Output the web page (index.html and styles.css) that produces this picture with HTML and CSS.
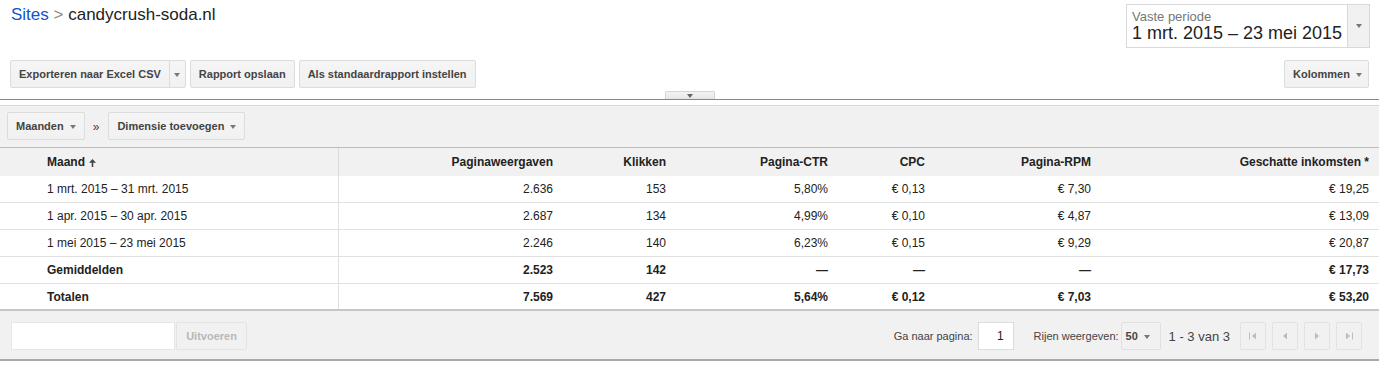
FILE: index.html
```html
<!DOCTYPE html>
<html lang="nl">
<head>
    <meta charset="UTF-8">
    <meta name="viewport" content="width=device-width, initial-scale=1.0">
    <title>Sites - candycrush-soda.nl</title>
    <link rel="stylesheet" href="styles.css">
</head>
<body>
    <div class="page-head">
        <div class="crumbs">
            <a class="crumb-link" href="#">Sites</a> <span class="crumb-sep">&gt;</span> candycrush-soda.nl
        </div>
        <div class="period">
            <div class="period-text">
                <div class="period-label">Vaste periode</div>
                <div class="period-range">1 mrt. 2015 – 23 mei 2015</div>
            </div>
            <div class="period-drop"><span class="caret"></span></div>
        </div>
    </div>

    <div class="actions">
        <div class="btn-split">
            <button class="btn">Exporteren naar Excel CSV</button><button class="btn btn-caret"><span class="caret"></span></button>
        </div>
        <button class="btn">Rapport opslaan</button>
        <button class="btn">Als standaardrapport instellen</button>
        <button class="btn btn-push">Kolommen <span class="caret"></span></button>
    </div>

    <div class="divider">
        <div class="divider-tab"><span class="caret caret-dark"></span></div>
    </div>

    <div class="filters">
        <button class="btn">Maanden <span class="caret"></span></button>
        <span class="filters-sep">»</span>
        <button class="btn">Dimensie toevoegen <span class="caret"></span></button>
    </div>

    <table class="report">
        <colgroup>
            <col style="width: 338px">
            <col style="width: 225px">
            <col style="width: 113px">
            <col style="width: 162px">
            <col style="width: 97px">
            <col style="width: 166px">
            <col style="width: 278px">
        </colgroup>
        <thead>
            <tr>
                <th class="col-dim">Maand <svg class="sort-icon" width="7" height="8" viewBox="0 0 7 8"><path d="M3.5 0L7 3.8H4.3V8H2.7V3.8H0z" fill="#444"/></svg></th>
                <th>Paginaweergaven</th>
                <th>Klikken</th>
                <th>Pagina-CTR</th>
                <th>CPC</th>
                <th>Pagina-RPM</th>
                <th>Geschatte inkomsten *</th>
            </tr>
        </thead>
        <tbody>
            <tr>
                <td class="col-dim">1 mrt. 2015 – 31 mrt. 2015</td>
                <td>2.636</td><td>153</td><td>5,80%</td><td>€ 0,13</td><td>€ 7,30</td><td>€ 19,25</td>
            </tr>
            <tr>
                <td class="col-dim">1 apr. 2015 – 30 apr. 2015</td>
                <td>2.687</td><td>134</td><td>4,99%</td><td>€ 0,10</td><td>€ 4,87</td><td>€ 13,09</td>
            </tr>
            <tr>
                <td class="col-dim">1 mei 2015 – 23 mei 2015</td>
                <td>2.246</td><td>140</td><td>6,23%</td><td>€ 0,15</td><td>€ 9,29</td><td>€ 20,87</td>
            </tr>
            <tr class="row-sum">
                <td class="col-dim">Gemiddelden</td>
                <td>2.523</td><td>142</td><td>—</td><td>—</td><td>—</td><td>€ 17,73</td>
            </tr>
            <tr class="row-sum">
                <td class="col-dim">Totalen</td>
                <td>7.569</td><td>427</td><td>5,64%</td><td>€ 0,12</td><td>€ 7,03</td><td>€ 53,20</td>
            </tr>
        </tbody>
    </table>

    <div class="footer">
        <div class="search">
            <input class="search-input" type="text">
            <button class="btn btn-disabled">Uitvoeren</button>
        </div>
        <div class="pager">
            <span class="pager-label">Ga naar pagina:</span>
            <input class="page-input" type="text" value="1">
            <span class="pager-label pager-rows">Rijen weergeven:</span>
            <button class="btn btn-rows">50 <span class="caret"></span></button>
            <span class="pager-count">1 - 3 van 3</span>
            <div class="pager-nav">
                <button class="nav-btn"><svg width="8" height="8" viewBox="0 0 8 8"><rect x="0" y="0.5" width="1" height="7"/><path d="M7 0.5v7L3 4z"/></svg></button>
                <button class="nav-btn"><svg width="8" height="8" viewBox="0 0 8 8"><path d="M6 0.5v7L2 4z"/></svg></button>
                <button class="nav-btn"><svg width="8" height="8" viewBox="0 0 8 8"><path d="M2 0.5v7L6 4z"/></svg></button>
                <button class="nav-btn"><svg width="8" height="8" viewBox="0 0 8 8"><path d="M1 0.5v7L5 4z"/><rect x="7" y="0.5" width="1" height="7"/></svg></button>
            </div>
        </div>
    </div>
</body>
</html>
```

FILE: styles.css
```css
body {
    margin: 0;
    font-family: Arial, 'Liberation Sans', sans-serif;
    color: #222;
    background-color: #fff;
}

/* kop */

.page-head {
    display: flex;
    justify-content: space-between;
    align-items: flex-start;
    padding: 0 9px 0 11px;
}

.crumbs {
    font-size: 17px;
    line-height: 20px;
    margin-top: 5px;
    color: #222;
}

.crumb-link {
    color: #15c;
    text-decoration: none;
}

.crumb-sep {
    color: #888;
}

.period {
    display: flex;
    width: 242px;
    margin-top: 4px;
    border: 1px solid #d9d9d9;
    background-color: #fff;
}

.period-text {
    flex: 1;
    padding: 4px 0 4px 5px;
}

.period-label {
    font-size: 13px;
    line-height: 15px;
    color: #777;
}

.period-range {
    font-size: 18px;
    line-height: 19px;
    color: #222;
}

.period-drop {
    width: 21px;
    display: flex;
    justify-content: center;
    align-items: center;
    background-color: #f1f1f1;
    border-left: 1px solid #d9d9d9;
}

.caret {
    display: inline-block;
    width: 0;
    height: 0;
    border-left: 3.5px solid transparent;
    border-right: 3.5px solid transparent;
    border-top: 4px solid #777;
    vertical-align: middle;
    margin-left: 3px;
}

.period-drop .caret,
.btn-caret .caret,
.divider-tab .caret {
    margin-left: 0;
}

.caret-dark {
    border-top-color: #666;
}

/* knoppen */

.btn {
    height: 28px;
    padding: 0 8px;
    font-family: inherit;
    font-size: 11px;
    font-weight: bold;
    color: #444;
    background: linear-gradient(#f5f5f5, #f1f1f1);
    border: 1px solid #dcdcdc;
    border-radius: 2px;
    cursor: default;
    white-space: nowrap;
}

.btn-split {
    display: flex;
}

.btn-split .btn:first-child {
    border-radius: 2px 0 0 2px;
}

.btn-caret {
    width: 17px;
    padding: 0;
    border-left: 1px solid #dcdcdc;
    margin-left: -1px;
    border-radius: 0 2px 2px 0;
}

.actions {
    display: flex;
    gap: 4px;
    padding: 0 10px;
    margin-top: 12px;
}

.btn-push {
    margin-left: auto;
    padding: 0 6px 0 8px;
}

/* scheiding */

.divider {
    position: relative;
    height: 1px;
    margin-top: 11px;
    background-color: #4d8ff4;
}

.divider-tab {
    position: absolute;
    left: 50%;
    bottom: 1px;
    transform: translateX(-50%);
    width: 48px;
    height: 7px;
    display: flex;
    justify-content: center;
    align-items: center;
    background: linear-gradient(#f3f3f3, #e6e6e6);
    border: 1px solid #d4d4d4;
    border-bottom: none;
    border-radius: 2px 2px 0 0;
}

.filters {
    display: flex;
    align-items: center;
    margin-top: 5px;
    padding: 6px 7px 7px;
    background-color: #f1f1f1;
    border-top: 1px solid #d9d9d9;
    border-bottom: 1px solid #bdbdbd;
}

.filters-sep {
    font-size: 12px;
    color: #444;
    padding: 2px 9px 0 8px;
}

/* tabel */

.report {
    width: 100%;
    table-layout: fixed;
    border-collapse: collapse;
    font-size: 12px;
}

.report th,
.report td {
    text-align: right;
    padding: 0 10px;
    white-space: nowrap;
}

.report th {
    height: 28px;
    font-weight: bold;
    background-color: #f1f1f1;
    color: #222;
}

.report td {
    height: 26px;
    border-bottom: 1px solid #e0e0e0;
    color: #222;
}

.report .col-dim {
    text-align: left;
    padding-left: 47px;
    border-right: 1px solid #e0e0e0;
}

.report th.col-dim {
    border-right-color: #dadada;
}

.sort-icon {
    vertical-align: -1px;
    margin-left: 1px;
}

.row-sum td {
    font-weight: bold;
}

.report tbody tr:last-child td {
    height: 25px;
    border-bottom: 2px solid #c6c6c6;
}

/* voet */

.footer {
    display: flex;
    align-items: center;
    justify-content: space-between;
    padding: 11px 17px 9px 11px;
    background-color: #f1f1f1;
    border-bottom: 2px solid #a9a9a9;
}

.search {
    display: flex;
    gap: 1px;
}

.search-input {
    width: 164px;
    height: 28px;
    box-sizing: border-box;
    border: 1px solid #e6e6e6;
    background-color: #fff;
    margin: 0;
}

.btn-disabled {
    width: 71px;
    color: #b8b8b8;
    background: #f1f1f1;
    border-color: #e4e4e4;
}

.pager {
    display: flex;
    align-items: center;
}

.pager-label {
    font-size: 11px;
    color: #444;
}

.page-input {
    width: 36px;
    height: 28px;
    box-sizing: border-box;
    margin: 0 0 0 5px;
    padding: 0 9px 0 0;
    text-align: right;
    font-family: inherit;
    font-size: 12px;
    color: #222;
    border: 1px solid #dcdcdc;
    background-color: #fff;
}

.pager-rows {
    margin-left: 20px;
    margin-right: 2px;
}

.btn-rows {
    width: 40px;
    padding: 0 0 0 4px;
    text-align: left;
    background: #f1f1f1;
    border-color: #e0e0e0;
}

.pager-count {
    font-size: 13px;
    color: #444;
    margin: 0 10px 0 8px;
}

.pager-nav {
    display: flex;
    gap: 6px;
}

.nav-btn {
    width: 26px;
    height: 28px;
    padding: 0;
    display: flex;
    justify-content: center;
    align-items: center;
    background-color: #f1f1f1;
    border: 1px solid #e2e2e2;
    border-radius: 2px;
    fill: #bdbdbd;
}
```
